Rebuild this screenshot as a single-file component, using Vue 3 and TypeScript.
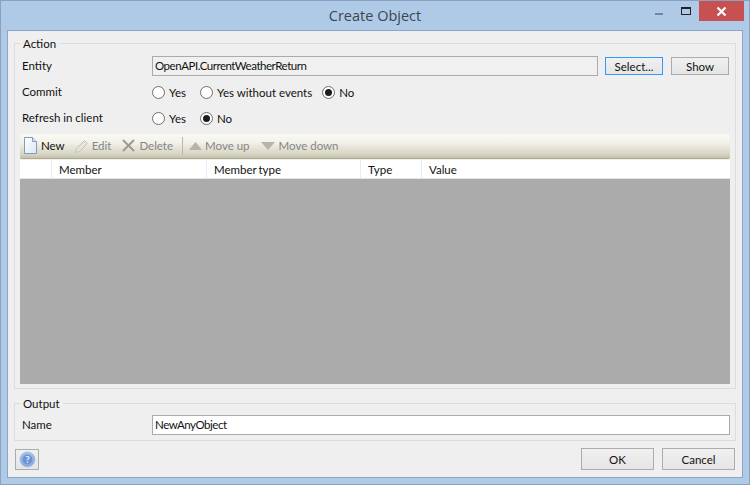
<script setup lang="ts">
const columns = [
  { label: '', width: 32 },
  { label: 'Member', width: 155 },
  { label: 'Member type', width: 154 },
  { label: 'Type', width: 61 },
  { label: 'Value', width: 308 },
]
</script>

<template>
  <div class="window">
    <header class="titlebar">
      <div class="title">Create Object</div>
      <div class="controls">
        <span class="min"></span>
        <span class="max"></span>
        <span class="close">
          <svg width="11" height="11" viewBox="0 0 11 11"><path d="M1.5 1.5l8 8M9.5 1.5l-8 8" stroke="#fff" stroke-width="2.2" /></svg>
        </span>
      </div>
    </header>
    <main class="client">
      <fieldset class="group action">
        <legend>Action</legend>
        <div class="row entity">
          <label>Entity</label>
          <div class="input readonly">OpenAPI.CurrentWeatherReturn</div>
          <button class="btn small focus">Select...</button>
          <button class="btn small">Show</button>
        </div>
        <div class="row radios commit">
          <label>Commit</label>
          <span class="radio r1"><i></i>Yes</span>
          <span class="radio r2"><i></i>Yes without events</span>
          <span class="radio"><i class="on"></i>No</span>
        </div>
        <div class="row radios refresh">
          <label>Refresh in client</label>
          <span class="radio r1"><i></i>Yes</span>
          <span class="radio"><i class="on"></i>No</span>
        </div>
        <div class="toolbar">
          <span class="tool active">
            <svg width="13" height="17" viewBox="0 0 13 17">
              <defs>
                <linearGradient id="pg" x1="0" y1="0" x2="1" y2="1"><stop offset="0" stop-color="#fff" /><stop offset="1" stop-color="#dbe6f3" /></linearGradient>
              </defs>
              <path d="M.5.5h8l4 4v12H.5z" fill="url(#pg)" stroke="#7f9db9" />
              <path d="M8.5.5v4h4" fill="#dce6f0" stroke="#7f9db9" />
            </svg>
            New
          </span>
          <span class="tool tight">
            <svg width="14" height="14" viewBox="0 0 14 14"><path d="M.5 13.5l1-4 8-8 3 3-8 8z" fill="#e4e3dc" stroke="#c4c3ba" /></svg>
            Edit
          </span>
          <span class="tool">
            <svg width="13" height="13" viewBox="0 0 13 13"><path d="M1 1l11 11M12 1L1 12" stroke="#9b9a93" stroke-width="2" /></svg>
            Delete
          </span>
          <span class="divider"></span>
          <span class="tool tight">
            <svg width="13" height="8" viewBox="0 0 13 8"><path d="M6.5 0L13 8H0z" fill="#b5b4ab" /></svg>
            Move up
          </span>
          <span class="tool">
            <svg width="14" height="8" viewBox="0 0 14 8"><path d="M7 8l7-8H0z" fill="#b5b4ab" /></svg>
            Move down
          </span>
        </div>
        <div class="grid">
          <div class="head">
            <div v-for="c in columns" :key="c.label" class="col" :style="{ width: c.width + 'px' }">{{ c.label }}</div>
          </div>
          <div class="body"></div>
        </div>
      </fieldset>
      <fieldset class="group output">
        <legend>Output</legend>
        <div class="row name">
          <label>Name</label>
          <div class="input">NewAnyObject</div>
        </div>
      </fieldset>
      <footer class="footer">
        <button class="btn help">
          <svg width="17" height="17" viewBox="0 0 17 17">
            <defs>
              <radialGradient id="hg" cx="50%" cy="40%" r="60%"><stop offset="0" stop-color="#c3d6f2" /><stop offset="1" stop-color="#7fa3dc" /></radialGradient>
            </defs>
            <circle cx="8.5" cy="8.5" r="7.5" fill="url(#hg)" stroke="#a9c2e8" />
            <circle cx="8.5" cy="8.5" r="5" fill="#6a93d4" />
            <text x="8.5" y="12" class="q">?</text>
          </svg>
        </button>
        <div class="actions">
          <button class="btn large">OK</button>
          <button class="btn large">Cancel</button>
        </div>
      </footer>
    </main>
  </div>
</template>

<style scoped>
.window {
  width: 750px;
  height: 485px;
  box-sizing: border-box;
  background: #aecae6;
  border: 1px solid #8aa2c0;
  display: flex;
  flex-direction: column;
  font-family: "Lato", "Liberation Sans", sans-serif;
  font-size: 11.5px;
  color: #111;
}
.titlebar {
  height: 29px;
  flex: none;
  display: flex;
  justify-content: center;
  position: relative;
}
.title {
  font-family: "Open Sans", "Liberation Sans", sans-serif;
  font-size: 14.5px;
  color: #3d4650;
  line-height: 30px;
}
.controls {
  position: absolute;
  top: 0;
  right: 5px;
  width: 89px;
  height: 20px;
  display: flex;
  align-items: flex-start;
}
.min {
  width: 8px;
  height: 2px;
  background: #74849a;
  margin: 12px 0 0 0;
}
.max {
  width: 8px;
  height: 5px;
  border: 1px solid #222;
  border-top-width: 2px;
  margin: 6px 0 0 18px;
}
.close {
  width: 45px;
  height: 20px;
  background: #c75050;
  margin-left: 8px;
  display: flex;
  align-items: center;
  justify-content: center;
}
.client {
  flex: 1;
  margin: 0 6px 6px;
  background: #efefef;
  border: 1px solid #8ba5c4;
  padding: 6px;
  display: flex;
  flex-direction: column;
  min-height: 0;
}
.group {
  margin: 0;
  padding: 0 5px;
  border: 1px solid #dcdcdc;
  position: relative;
  min-width: 0;
  box-sizing: border-box;
  width: 722px;
}
.group legend {
  padding: 0 3px;
  margin-left: 0;
  line-height: 13px;
  height: 13px;
}
.action {
  height: 352px;
}
.output {
  height: 44px;
  margin-top: 8px;
}
.row {
  display: flex;
  align-items: center;
}
.row label {
  width: 132px;
  padding: 0 0 1px 2px;
  box-sizing: border-box;
  flex: none;
}
.entity {
  height: 20px;
  margin-top: 6px;
}
.input {
  height: 20px;
  box-sizing: border-box;
  border: 1px solid #ababab;
  background: #fff;
  line-height: 18px;
  padding-left: 2px;
  flex: 1;
  letter-spacing: -0.47px;
}
.readonly {
  background: #f0f0f0;
  flex: none;
  width: 446px;
}
.btn {
  box-sizing: border-box;
  border: 1px solid #acacac;
  background: linear-gradient(#f0f0f0, #e5e5e5);
  font: inherit;
  color: inherit;
  padding: 0;
}
.small {
  width: 58px;
  height: 18px;
  line-height: 15px;
  margin-left: 8px;
}
.entity .focus {
  margin-left: 7px;
  border-color: #3399ff;
}
.radios {
  height: 16px;
}
.commit {
  margin-top: 8px;
}
.refresh {
  margin-top: 10px;
}
.radio {
  display: inline-flex;
  align-items: center;
  gap: 4px;
}
.radio.r1 {
  margin-right: 14px;
}
.radio.r2 {
  margin-right: 10px;
}
.radio i {
  width: 13px;
  height: 13px;
  box-sizing: border-box;
  border: 1px solid #6e6e6e;
  border-radius: 50%;
  background: #fff;
  display: block;
  position: relative;
}
.radio i.on::after {
  content: "";
  position: absolute;
  left: 2px;
  top: 2px;
  width: 7px;
  height: 7px;
  border-radius: 50%;
  background: #1c1c1c;
}
.toolbar {
  height: 25px;
  width: 710px;
  margin-top: 8px;
  box-sizing: border-box;
  border-radius: 2px;
  border-bottom: 1px solid #aeab90;
  background: linear-gradient(#f9f8f2, #f3f2ea 35%, #d6d4c2 85%, #c4c2ab);
  display: flex;
  align-items: center;
  padding: 0 0 1px 4px;
  color: #868686;
}
.tool {
  display: inline-flex;
  align-items: center;
  gap: 4px;
  margin-right: 10px;
}
.tool.tight {
  gap: 3px;
  margin-right: 11px;
}
.tool.active {
  color: #111;
}
.divider {
  width: 1px;
  height: 18px;
  background: #b9b8a8;
  margin: 0 6px 0 -1px;
}
.grid {
  width: 710px;
  height: 224px;
  margin-top: 1px;
  display: flex;
  flex-direction: column;
}
.head {
  height: 19px;
  flex: none;
  background: #fff;
  display: flex;
  box-sizing: border-box;
  border-bottom: 1px solid #e0e3e8;
}
.col {
  box-sizing: border-box;
  padding-left: 7px;
  line-height: 20px;
  border-right: 1px solid #e3ecf8;
  word-spacing: -1px;
}
.col:last-child {
  border-right: 0;
}
.body {
  flex: 1;
  background: #ababab;
}
.name {
  margin-top: 5px;
  height: 20px;
}
.name .input {
  flex: none;
  width: 578px;
}
.footer {
  display: flex;
  justify-content: space-between;
  margin-top: 7px;
  flex: 1;
  align-items: flex-start;
}
.help {
  width: 24px;
  height: 21px;
  margin: 1px 0 0 1px;
  display: flex;
  align-items: center;
  justify-content: center;
}
.q {
  fill: #e8f0fb;
  font-size: 10px;
  font-weight: 700;
  text-anchor: middle;
}
.actions {
  display: flex;
  gap: 8px;
  margin-right: 1px;
}
.large {
  width: 73px;
  height: 22px;
}
</style>

<style>
html, body {
  margin: 0;
  overflow: hidden;
}
</style>
